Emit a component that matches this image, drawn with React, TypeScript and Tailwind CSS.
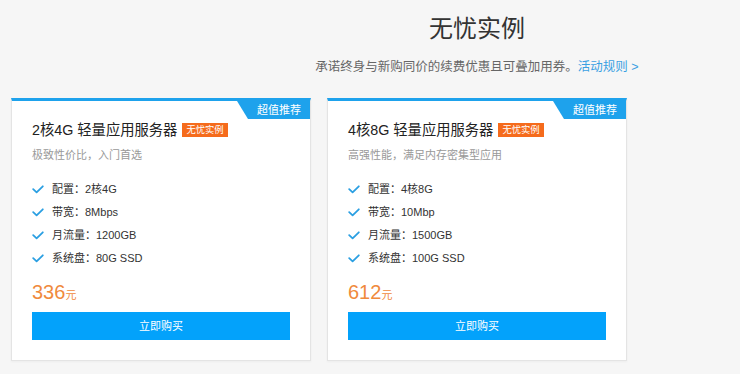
import React from "react";

type Plan = {
  title: string;
  desc: string;
  features: [string, string][];
  price: string;
};

const plans: Plan[] = [
  {
    title: "2核4G 轻量应用服务器",
    desc: "极致性价比，入门首选",
    features: [
      ["配置：", "2核4G"],
      ["带宽：", "8Mbps"],
      ["月流量：", "1200GB"],
      ["系统盘：", "80G SSD"],
    ],
    price: "336",
  },
  {
    title: "4核8G 轻量应用服务器",
    desc: "高强性能，满足内存密集型应用",
    features: [
      ["配置：", "4核8G"],
      ["带宽：", "10Mbp"],
      ["月流量：", "1500GB"],
      ["系统盘：", "100G SSD"],
    ],
    price: "612",
  },
];

function Check() {
  return (
    <svg width="12" height="9" viewBox="0 0 12 9" className="shrink-0">
      <polyline
        points="1.2,4.2 4.6,7.3 10.8,1.3"
        fill="none"
        stroke="#2a9fe2"
        strokeWidth="1.8"
        strokeLinecap="round"
        strokeLinejoin="round"
      />
    </svg>
  );
}

function Card({ plan }: { plan: Plan }) {
  return (
    <div className="relative w-[300px] h-[263px] bg-white border border-[#e4e4e4] border-t-[3px] border-t-[#1ea2ec] px-[20px] shadow-[0_1px_2px_rgba(0,0,0,0.04)]">
      <div className="absolute top-0 right-0 h-[18px] w-[73px] bg-[#1ea2ec] [clip-path:polygon(0_0,100%_0,100%_100%,11px_100%)] pl-[11px] flex items-center justify-center text-white text-[11px] leading-none">
        超值推荐
      </div>
      <div className="pt-[19px] flex items-center h-[39px]">
        <span className="text-[14.3px] leading-[20px] text-[#222]">{plan.title}</span>
        <span className="ml-[5px] h-[14px] px-[4px] bg-[#f56b1c] text-white text-[9.3px] leading-[14px]">
          无忧实例
        </span>
      </div>
      <div className="mt-[7px] text-[11px] leading-[16px] text-[#999]">{plan.desc}</div>
      <ul className="mt-[15px]">
        {plan.features.map(([k, v]) => (
          <li key={k} className="flex items-center h-[23px] text-[11px] text-[#333]">
            <Check />
            <span className="ml-[8px]">
              {k}
              {v}
            </span>
          </li>
        ))}
      </ul>
      <div className="mt-[8px] h-[28px] flex items-baseline text-[#f08a3c]">
        <span className="text-[20px] leading-[28px]">{plan.price}</span>
        <span className="text-[11px]">元</span>
      </div>
      <button className="mt-[6px] w-full h-[28px] bg-[#03a2fb] text-white text-[11px] flex items-center justify-center">
        立即购买
      </button>
    </div>
  );
}

export default function App() {
  return (
    <div
      className="w-[740px] h-[374px] overflow-hidden bg-[#f6f6f6]"
      style={{ fontFamily: '"Liberation Sans", "Noto Sans CJK SC", sans-serif' }}
    >
      <div className="pl-[214px] pt-[13px] flex flex-col items-center">
        <h1 className="text-[24px] leading-[32px] text-[#333]">无忧实例</h1>
        <p className="mt-[13px] text-[12.5px] leading-[18px] text-[#666]">
          承诺终身与新购同价的续费优惠且可叠加用券。
          <span className="text-[#3aa0e2]">活动规则 &gt;</span>
        </p>
      </div>
      <div className="mt-[22px] pl-[11px] flex gap-[16px]">
        {plans.map((p) => (
          <Card key={p.price} plan={p} />
        ))}
      </div>
    </div>
  );
}
